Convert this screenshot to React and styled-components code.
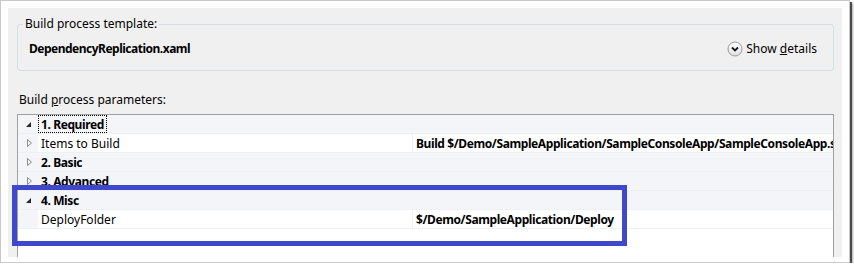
import styled, { createGlobalStyle } from "styled-components";

const GlobalStyle = createGlobalStyle`
  body {
    margin: 0;
    background: #ffffff;
    font-family: "Noto Sans", "Open Sans", sans-serif;
    font-size: 12px;
    color: #000;
  }
`;

const Frame = styled.div`
  width: 834px;
  padding: 7px 7px 5px 7px;
  background: #ffffff;
  border: 1px solid #c9c9c9;
  box-shadow: 2px 2px 0 #4a4a4a, 3px 3px 2px rgba(0, 0, 0, 0.35);
`;

const Panel = styled.div`
  position: relative;
  height: 249px;
  box-sizing: border-box;
  padding: 8px 8px 0 9px;
  background: #f0f0f0;
  display: flex;
  flex-direction: column;
`;

const GroupBox = styled.fieldset`
  margin: 0;
  padding: 8px 16px 12px 11px;
  border: 1px solid #d5dfe5;
  border-radius: 3px;
  display: flex;
  justify-content: space-between;
  align-items: center;
  legend {
    margin-left: -6px;
    padding: 0 2px;
    line-height: 16px;
  }
`;

const TemplateName = styled.div`
  font-weight: bold;
  letter-spacing: -0.5px;
  line-height: 18px;
`;

const DetailsLink = styled.div`
  display: flex;
  align-items: center;
  gap: 3px;
  line-height: 18px;
`;

const SectionLabel = styled.div`
  margin: 21px 0 6px 2px;
  line-height: 16px;
`;

const Grid = styled.div`
  flex: 1;
  background: #ffffff;
  border-top: 1px solid #a0a0a0;
  border-left: 1px solid #a0a0a0;
  border-right: 1px solid #a0a0a0;
  overflow: hidden;
`;

const Row = styled.div`
  display: flex;
  height: 18px;
  border-bottom: 1px solid #edf0f4;
  background: ${(p) => (p.$category ? "#f3f5f9" : "#ffffff")};
  line-height: 19px;
  white-space: nowrap;
`;

const Gutter = styled.div`
  width: 20px;
  flex: none;
  background: #f3f5f9;
  display: flex;
  align-items: center;
  justify-content: center;
`;

const CategoryLabel = styled.div`
  font-weight: bold;
  letter-spacing: -0.4px;
  padding: 0 3px;
  outline: ${(p) => (p.$focused ? "1px dotted #000" : "none")};
  outline-offset: -1px;
`;

const NameCell = styled.div`
  width: 375px;
  flex: none;
  padding-left: 3px;
  box-sizing: border-box;
  border-right: 1px solid #f0f0f0;
`;

const ValueCell = styled.div`
  padding-left: 3px;
  font-weight: bold;
  letter-spacing: -0.4px;
  overflow: hidden;
`;

const Highlight = styled.div`
  position: absolute;
  left: 4px;
  top: 177px;
  width: 605px;
  height: 51px;
  border: 5px solid #3f48cc;
  pointer-events: none;
`;

function Expander({ open }) {
  return open ? (
    <svg width="9" height="9" viewBox="0 0 9 9">
      <path d="M7 2 L7 7 L2 7 Z" fill="#262626" />
    </svg>
  ) : (
    <svg width="9" height="10" viewBox="0 0 9 10">
      <path d="M3.5 1.5 L7.5 5 L3.5 8.5 Z" fill="none" stroke="#8c8c8c" />
    </svg>
  );
}

function DetailsIcon() {
  return (
    <svg width="16" height="16" viewBox="0 0 16 16">
      <defs>
        <linearGradient id="g" x1="0" y1="0" x2="0" y2="1">
          <stop offset="0" stopColor="#ffffff" />
          <stop offset="1" stopColor="#e2e2e2" />
        </linearGradient>
      </defs>
      <circle cx="8" cy="8" r="7" fill="url(#g)" stroke="#9a9a9a" />
      <path d="M5 6.5 L8 9.5 L11 6.5" fill="none" stroke="#1a1a1a" strokeWidth="1.8" />
    </svg>
  );
}

const rows = [
  { type: "cat", label: "1. Required", open: true, focused: true },
  { type: "prop", name: "Items to Build", value: "Build $/Demo/SampleApplication/SampleConsoleApp/SampleConsoleApp.sln", expandable: true },
  { type: "cat", label: "2. Basic" },
  { type: "cat", label: "3. Advanced" },
  { type: "cat", label: "4. Misc", open: true },
  { type: "prop", name: "DeployFolder", value: "$/Demo/SampleApplication/Deploy" },
];

export default function App() {
  return (
    <>
      <GlobalStyle />
      <Frame>
        <Panel>
          <GroupBox>
            <legend>Build process template:</legend>
            <TemplateName>DependencyReplication.xaml</TemplateName>
            <DetailsLink>
              <DetailsIcon />
              <span>
                Show <u>d</u>etails
              </span>
            </DetailsLink>
          </GroupBox>
          <SectionLabel>
            Build <u>p</u>rocess parameters:
          </SectionLabel>
          <Grid>
            {rows.map((r, i) =>
              r.type === "cat" ? (
                <Row $category key={i}>
                  <Gutter>
                    <Expander open={r.open} />
                  </Gutter>
                  <CategoryLabel $focused={r.focused}>{r.label}</CategoryLabel>
                </Row>
              ) : (
                <Row key={i}>
                  <Gutter>{r.expandable && <Expander />}</Gutter>
                  <NameCell>{r.name}</NameCell>
                  <ValueCell>{r.value}</ValueCell>
                </Row>
              )
            )}
          </Grid>
          <Highlight />
        </Panel>
      </Frame>
    </>
  );
}
